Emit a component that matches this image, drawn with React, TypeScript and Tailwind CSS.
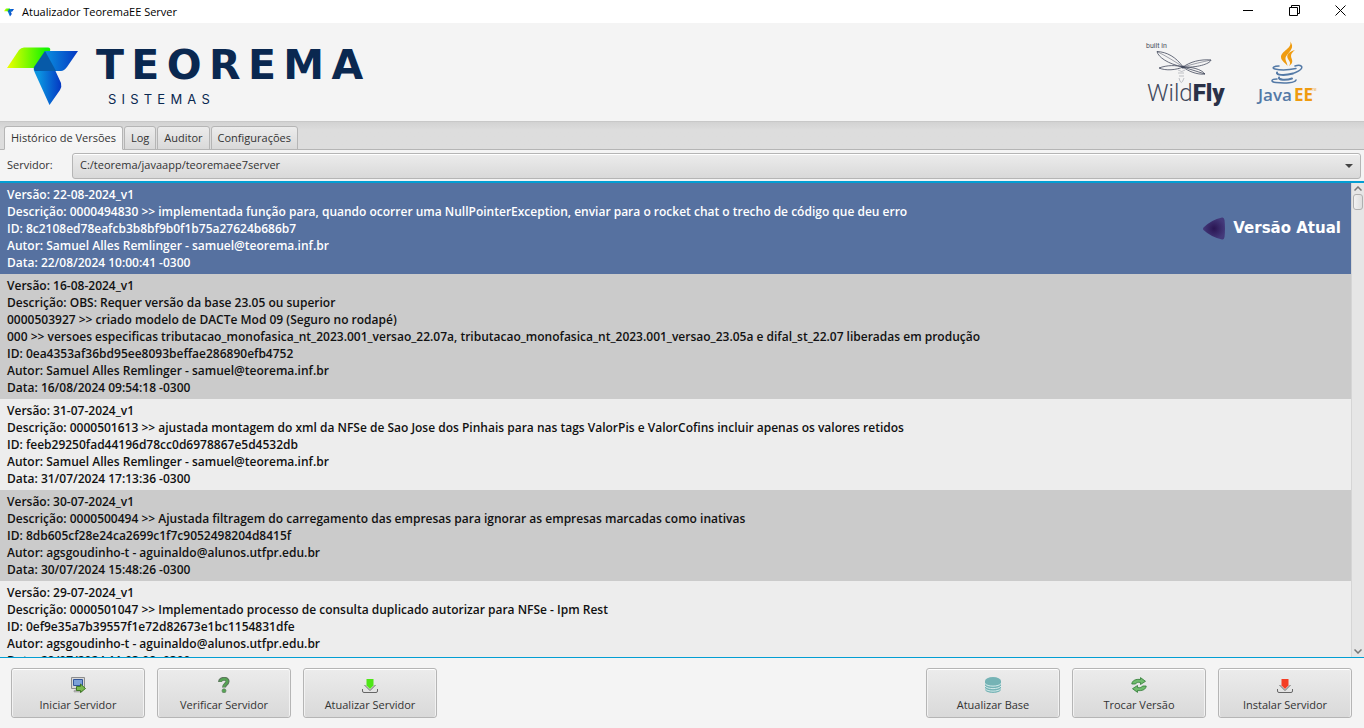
import React, { useState } from "react";

const versions = [
  {
    version: "22-08-2024_v1",
    description: [
      "0000494830 >> implementada função para, quando ocorrer uma NullPointerException, enviar para o rocket chat o trecho de código que deu erro",
    ],
    id: "8c2108ed78eafcb3b8bf9b0f1b75a27624b686b7",
    author: "Samuel Alles Remlinger - samuel@teorema.inf.br",
    date: "22/08/2024 10:00:41 -0300",
    current: true,
  },
  {
    version: "16-08-2024_v1",
    description: [
      "OBS: Requer versão da base 23.05 ou superior",
      "0000503927 >> criado modelo de DACTe Mod 09 (Seguro no rodapé)",
      "000 >> versoes especificas tributacao_monofasica_nt_2023.001_versao_22.07a, tributacao_monofasica_nt_2023.001_versao_23.05a e difal_st_22.07 liberadas em produção",
    ],
    id: "0ea4353af36bd95ee8093beffae286890efb4752",
    author: "Samuel Alles Remlinger - samuel@teorema.inf.br",
    date: "16/08/2024 09:54:18 -0300",
  },
  {
    version: "31-07-2024_v1",
    description: [
      "0000501613 >> ajustada montagem do xml da NFSe de Sao Jose dos Pinhais para nas tags ValorPis e ValorCofins incluir apenas os valores retidos",
    ],
    id: "feeb29250fad44196d78cc0d6978867e5d4532db",
    author: "Samuel Alles Remlinger - samuel@teorema.inf.br",
    date: "31/07/2024 17:13:36 -0300",
  },
  {
    version: "30-07-2024_v1",
    description: [
      "0000500494 >> Ajustada filtragem do carregamento das empresas para ignorar as empresas marcadas como inativas",
    ],
    id: "8db605cf28e24ca2699c1f7c9052498204d8415f",
    author: "agsgoudinho-t - aguinaldo@alunos.utfpr.edu.br",
    date: "30/07/2024 15:48:26 -0300",
  },
  {
    version: "29-07-2024_v1",
    description: [
      "0000501047 >> Implementado processo de consulta duplicado autorizar para NFSe - Ipm Rest",
    ],
    id: "0ef9e35a7b39557f1e72d82673e1bc1154831dfe",
    author: "agsgoudinho-t - aguinaldo@alunos.utfpr.edu.br",
    date: "29/07/2024 11:03:08 -0300",
  },
];

const tabs = ["Histórico de Versões", "Log", "Auditor", "Configurações"];

const TeoremaMark = ({ id, className }: { id: string; className: string }) => (
  <svg viewBox="0 0 71 58" className={className} aria-hidden="true">
    <defs>
      <linearGradient id={id + "g"} x1="0" x2="1">
        <stop offset="0" stopColor="#f0ff00" />
        <stop offset="0.9" stopColor="#14f400" />
      </linearGradient>
      <linearGradient id={id + "b"} x1="0" x2="1">
        <stop offset="0.2" stopColor="#0b93e0" />
        <stop offset="1" stopColor="#0437c2" />
      </linearGradient>
    </defs>
    <path d="M0 21 12 3Q14 .5 17 .5H41Q44 .5 43 4L28 21Z" fill={`url(#${id}g)`} />
    <path d="M38 4H71L60 20Q57 24 54 24H28Z" fill={`url(#${id}b)`} />
    <path d="M27 21 48 23 54 36Q55 40 53 43L42.5 58 28 26Q26 23 27 21Z" fill={`url(#${id}b)`} />
    <path d="M38 4 27 20Q26 22 28 24H49Z" fill="#075aa8" />
  </svg>
);

const WildFlyLogo = () => (
  <svg viewBox="0 0 90 75" className="h-[75px] w-[90px]" role="img" aria-label="built in WildFly">
    <text x="6" y="13" fontSize="7" fill="#4b4f5c" className="font-[Roboto,sans-serif]">built in</text>
    <g fill="none" stroke="#42495c" strokeWidth="0.8">
      <path d="M43 32C36 22 27 17 17 16.5C18 22 28 29 43 32Z" />
      <path d="M17 16.5C26 21 36 27 43 32" strokeWidth="0.5" />
      <path d="M43 32C50 27 60 24 71 25C70 29 56 33 43 32Z" />
      <path d="M43 32C53 29 62 27 71 25" strokeWidth="0.5" />
      <path d="M43 32C36 30 27 30 19 33C26 36 36 35 43 32Z" />
      <path d="M43 32C48 36 57 40 65 39C61 34 52 32 43 32Z" />
      <path d="M43 32C50 34 58 37 65 39" />
      <path d="M38 35Q42 38 45 35M38 38H44M39 41H44M39 43Q41 52 44 43" strokeWidth="0.5" opacity="0.6" />
    </g>
    <circle cx="43" cy="32" r="1.5" fill="#42495c" />
    <text x="7" y="66" fontSize="24" fontWeight="300" fill="#42495c" className="font-[Roboto,sans-serif]">
      Wild<tspan fontWeight="900" fill="#2a3147">Fly</tspan>
    </text>
  </svg>
);

const JavaLogo = () => (
  <svg viewBox="0 0 70 75" className="h-[75px] w-[70px]" role="img" aria-label="Java EE">
    <path d="M40 6.5C43 13 31 16 31 22C31 26 36 28 37.5 31C37 26 33.5 24 37 20C40 16 45 12 40 6.5Z" fill="#ef9b0f" />
    <path d="M45 15C38 17 36 20 38 24C40 27 41 28 39 31C45 27 41 24 41 21C41 18 43 17 45 15Z" fill="#ef9b0f" />
    <g fill="none" stroke="#5379a6" strokeLinecap="round" strokeWidth="1.5">
      <path d="M29 31C24 31 21 33 25 34C31 35.5 39 35 46 33.5" />
      <path d="M45 31C51 29 54 32 50 35C48 37 46 37 44 38" />
      <path d="M27 37.5C26 40 34 41 43 38.5" strokeWidth="2" />
      <path d="M29 42.5C28 45 36 45.5 42 43.5" strokeWidth="2" />
      <path d="M27 44C21 44 20 47 26 47.5C35 48.5 45 48 46 45" />
    </g>
    <text x="8" y="66" fontSize="17" fontWeight="600" fill="#5379a6" className="font-['Open_Sans',sans-serif]">Java</text>
    <text x="44" y="66" fontSize="17" fontWeight="700" fill="#ef9b0f" className="font-['Open_Sans',sans-serif]">EE</text>
    <text x="62" y="56" fontSize="3" fill="#ef9b0f" className="font-['Open_Sans',sans-serif]">TM</text>
  </svg>
);

const StartIcon = () => (
  <svg viewBox="0 0 16 16" className="size-4" aria-hidden="true">
    <path d="M1.5 .5H14.5V11.5H1.5Z" fill="#d8d8d8" stroke="#8c8c8c" />
    <path d="M3.5 2.5H12.5V8.5H3.5Z" fill="#7ba0d8" stroke="#33579a" />
    <path d="M6 12H9V13.500H12V15H4V13.500H6Z" fill="#b9b9b9" stroke="#8c8c8c" strokeWidth="0.5" />
    <path d="M6.5 9.5H10.5V7L15.5 11.5 10.5 15.5V13.5H6.5Z" fill="#79b84e" stroke="#35701c" strokeWidth="0.9" />
  </svg>
);

const HelpIcon = () => (
  <svg viewBox="0 0 16 16" className="size-4" aria-hidden="true">
    <path d="M4 5C4 .8 12 .8 11.5 4.5C11.300 7.3 8 7.3 8 10.500" fill="none" stroke="#5d7a5d" strokeWidth="4" />
    <path d="M4.500 4.500C5 1.5 11.5 1 11.3 4.5C11 7.3 8 7.3 8 10" fill="none" stroke="#55a553" strokeWidth="2" />
    <circle cx="8" cy="13.8" r="2" fill="#55a553" stroke="#5d7a5d" strokeWidth="0.7" />
  </svg>
);

const DownloadIcon = ({ color }: { color: string }) => (
  <svg viewBox="0 0 16 16" className="size-4" aria-hidden="true">
    <path d="M.5 12V14Q.5 15.5 2 15.5H14Q15.5 15.5 15.5 14V12" fill="none" stroke="#666" />
    <path d="M2.5 8 8 13.500 13.5 8" fill="none" stroke="#666" />
    <path d="M4.500 2H11.5V8.5L8 12 4.500 8.5Z" fill={color} />
  </svg>
);

const DatabaseIcon = () => (
  <svg viewBox="0 0 16 16" className="size-4" aria-hidden="true">
    <path d="M0 4V12C0 17.2 16 17.2 16 12V4Z" fill="#75b3b5" />
    <ellipse cx="8" cy="4" rx="8" ry="4" fill="#75b3b5" />
    <path d="M0 6.5C2 10 14 10 16 6.5M0 9C2 12.5 14 12.5 16 9M0 11.5C2 15 14 15 16 11.5" fill="none" stroke="#dff0f0" strokeWidth="0.9" />
  </svg>
);

const SwapIcon = () => (
  <svg viewBox="0 0 16 16" className="size-4" aria-hidden="true">
    <g fill="#6fbb6c" stroke="#2f7a35" strokeWidth="0.8" strokeLinejoin="round">
      <path d="M.8 7C1 3.5 5 1.8 9.5 2.5V.6L14.5 4.3 9.5 7.5V5.5C7 5 5 5.5 4.5 7Z" />
      <path d="M15.2 9C15 12.5 11 14.2 6.5 13.5V15.4L1.5 11.7 6.5 8.5V10.5C9 11 11 10.5 11.5 9Z" />
    </g>
  </svg>
);

const ActionButton = ({ label, icon }: { label: string; icon: React.ReactNode }) => (
  <button
    type="button"
    className="flex h-[50px] w-[134px] flex-col items-center justify-center gap-1 rounded-[3px] border border-[#b5b5b5] bg-linear-to-b from-[#ececec] to-[#d9d9d9] pt-1 leading-4 text-[#333] shadow-[inset_0_1px_0_#fff,inset_1px_0_0_#f2f2f2,inset_-1px_0_0_#f2f2f2]"
  >
    {icon}
    <span>{label}</span>
  </button>
);

const App = () => {
  const [activeTab, setActiveTab] = useState(tabs[0]);

  return (
    <div className="flex h-screen flex-col overflow-hidden bg-[#f4f4f4] font-['Open_Sans',sans-serif] text-[11px] text-[#333]">
      {/* window title */}
      <div className="flex h-[23px] shrink-0 items-center justify-between bg-white pr-px">
        <div className="flex items-center gap-2 pt-px pl-1 text-black">
          <TeoremaMark id="small" className="h-[9px] w-[10px]" />
          <span>Atualizador TeoremaEE Server</span>
        </div>
        <div className="flex pb-[2px]">
          <button type="button" aria-label="Minimizar" className="flex w-[46px] items-center justify-center">
            <svg viewBox="0 0 11 11" className="size-[11px]"><path d="M0 5.5H10" stroke="#000" /></svg>
          </button>
          <button type="button" aria-label="Restaurar" className="flex w-[46px] items-center justify-center">
            <svg viewBox="0 0 11 11" className="size-[11px]" fill="none" stroke="#000">
              <path d="M.5 2.5H8.5V10.5H.5ZM2.5 2.5V.5H10.5V8.5H8.5" />
            </svg>
          </button>
          <button type="button" aria-label="Fechar" className="flex w-[46px] items-center justify-center">
            <svg viewBox="0 0 11 11" className="size-[11px]"><path d="M.5 .5 10.5 10.5M10.5 .5 .5 10.5" stroke="#000" /></svg>
          </button>
        </div>
      </div>

      {/* logos */}
      <header className="flex h-[98px] shrink-0 items-start justify-between pt-3 pr-[44px] pl-[7px]">
        <div className="flex gap-[18px] pt-3">
          <TeoremaMark id="big" className="h-[58px] w-[71px]" />
          <div className="text-[#0a2850]">
            <div className="font-['DejaVu_Sans',sans-serif] text-[41px] leading-9 font-bold tracking-[0.18em]">TEOREMA</div>
            <div className="pt-2 pl-3 font-[Inter,sans-serif] text-[13px] leading-4 tracking-[0.4em]">SISTEMAS</div>
          </div>
        </div>
        <div className="flex gap-5">
          <WildFlyLogo />
          <JavaLogo />
        </div>
      </header>

      {/* tabs */}
      <div role="tablist" className="flex h-[29px] shrink-0 items-end gap-px border-t border-[#c8c8c8] bg-linear-to-b from-[#d2d2d2] to-[#dddddd] to-30% pl-1 shadow-[inset_0_-1px_0_#b5b5b5]">
        {tabs.map((tab) => (
          <button
            key={tab}
            type="button"
            role="tab"
            aria-selected={tab === activeTab}
            onClick={() => setActiveTab(tab)}
            className="h-[24px] rounded-t-[3px] border border-[#b5b5b5] bg-linear-to-b from-[#ececec] to-[#d9d9d9] px-[6px] text-[#333] aria-selected:border-b-[#f4f4f4] aria-selected:from-[#f8f8f8] aria-selected:to-[#f4f4f4]"
          >
            {tab}
          </button>
        ))}
      </div>

      <div className="flex h-[31px] shrink-0 items-center gap-[18px] pr-[3px] pl-[7px]">
        <label htmlFor="server" className="w-[47px]">Servidor:</label>
        <div className="relative flex-1">
          <select
            id="server"
            className="block h-[26px] w-full appearance-none rounded-[3px] border border-[#b5b5b5] bg-linear-to-b from-[#ececec] to-[#d9d9d9] px-[7px] text-[#333] shadow-[inset_0_1px_0_#fff]"
          >
            <option>C:/teorema/javaapp/teoremaee7server</option>
          </select>
          <svg viewBox="0 0 8 4" className="pointer-events-none absolute top-[11px] right-[8px] h-1 w-2" aria-hidden="true">
            <path d="M0 0H8L4 4Z" fill="#444" />
          </svg>
        </div>
      </div>

      {/* version history */}
      <main className="flex min-h-0 flex-1 border-t-2 border-b border-[#039ed3]">
        <ul className="min-w-0 flex-1 overflow-hidden text-xs leading-[17px] font-semibold">
          {versions.map((v) => (
            <li
              key={v.version}
              className={
                v.current
                  ? "flex items-center justify-between bg-[#5671a0] py-[3px] pr-[10px] pl-[7px] text-white"
                  : "bg-[#ededed] py-[3px] pl-[7px] text-[#111] even:bg-[#cbcbcb]"
              }
            >
              <div>
                <p>Versão: {v.version}</p>
                {v.description.map((line, i) => (
                  <p key={i}>{i === 0 ? "Descrição: " + line : line}</p>
                ))}
                <p>ID: {v.id}</p>
                <p>Autor: {v.author}</p>
                <p>Data: {v.date}</p>
              </div>
              {v.current && (
                <div className="flex items-center gap-2 font-['DejaVu_Sans',sans-serif] text-[15px] font-bold">
                  <svg viewBox="0 0 22 23" className="h-[23px] w-[22px]" aria-hidden="true">
                    <defs>
                      <radialGradient id="arrow">
                        <stop offset="0" stopColor="#2a1552" />
                        <stop offset="1" stopColor="#43397a" />
                      </radialGradient>
                    </defs>
                    <path d="M.5 10.5Q8 3 19 .5Q21 0 21.5 3Q22.5 12 21.5 20Q21 23 19 22.5Q8 20 .5 13Q-.5 12 .5 10.5Z" fill="url(#arrow)" />
                  </svg>
                  <span>Versão Atual</span>
                </div>
              )}
            </li>
          ))}
        </ul>
        <div className="flex w-[13px] flex-col items-center justify-between border-l border-[#d5d5d5] bg-[#e6e6e6]">
          <div className="flex flex-col items-center">
            <button type="button" aria-label="Rolar para cima" className="flex h-[11px] items-center">
              <svg viewBox="0 0 8 5" className="h-[5px] w-2"><path d="M.5 4.5 4 1 7.5 4.5" fill="none" stroke="#777" strokeWidth="1.5" /></svg>
            </button>
            <div className="h-4 w-[10px] rounded-[3px] border border-[#b0b0b0] bg-linear-to-r from-[#f2f2f2] to-[#dedede]" />
          </div>
          <button type="button" aria-label="Rolar para baixo" className="flex h-[11px] items-center">
            <svg viewBox="0 0 8 5" className="h-[5px] w-2"><path d="M.5 .5 4 4 7.5 .5" fill="none" stroke="#777" strokeWidth="1.5" /></svg>
          </button>
        </div>
      </main>

      <footer className="flex h-[70px] shrink-0 justify-between pt-[10px] pr-3 pl-[11px]">
        <div className="flex gap-3">
          <ActionButton label="Iniciar Servidor" icon={<StartIcon />} />
          <ActionButton label="Verificar Servidor" icon={<HelpIcon />} />
          <ActionButton label="Atualizar Servidor" icon={<DownloadIcon color="#4fe617" />} />
        </div>
        <div className="flex gap-3">
          <ActionButton label="Atualizar Base" icon={<DatabaseIcon />} />
          <ActionButton label="Trocar Versão" icon={<SwapIcon />} />
          <ActionButton label="Instalar Servidor" icon={<DownloadIcon color="#f43d24" />} />
        </div>
      </footer>
    </div>
  );
};

export default App;
